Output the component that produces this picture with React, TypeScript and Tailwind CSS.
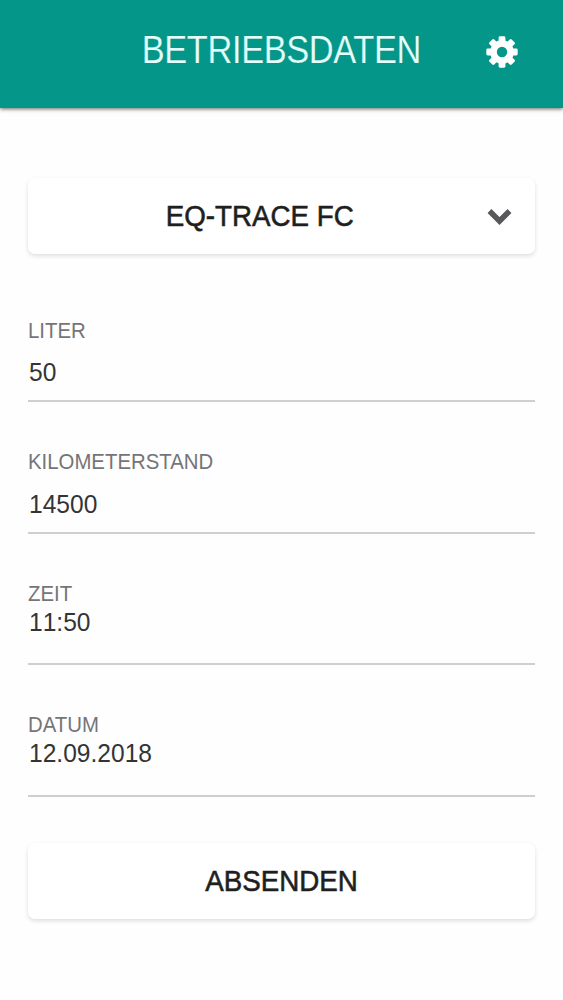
import { useState } from "react";

type Field = {
  label: string;
  value: string;
  labelClass: string;
  valueClass: string;
};

const fields: Field[] = [
  { label: "LITER", value: "50", labelClass: "mt-[18px]", valueClass: "mt-[15px]" },
  { label: "KILOMETERSTAND", value: "14500", labelClass: "mt-[17px]", valueClass: "mt-[16px]" },
  { label: "ZEIT", value: "11:50", labelClass: "mt-[17px]", valueClass: "mt-[2px]" },
  { label: "DATUM", value: "12.09.2018", labelClass: "mt-[17px]", valueClass: "mt-[2px]" }
];

const cardClass =
  "flex h-[76px] w-full items-center rounded-[7px] bg-white shadow-[0_2px_4px_rgba(0,0,0,0.13)]";

const buttonTextClass =
  "inline-block scale-x-[0.925] whitespace-nowrap text-[30px] leading-none text-[#1f1f21] [-webkit-text-stroke:0.6px_#1f1f21]";

const toothAngles = [0, 45, 90, 135];

function GearIcon() {
  return (
    <svg width="38" height="38" viewBox="-19 -19 38 38" className="text-white">
      {toothAngles.map((angle) => (
        <rect
          key={angle}
          x="-3.4"
          y="-15.7"
          width="6.8"
          height="31.4"
          rx="1.4"
          fill="currentColor"
          transform={`rotate(${angle})`}
        />
      ))}
      <circle r="11.8" fill="currentColor" />
      <circle r="5.2" fill="#049688" />
    </svg>
  );
}

export default function App() {
  const [values, setValues] = useState(fields.map((field) => field.value));

  function updateValue(index: number, value: string) {
    setValues((current) => current.map((item, i) => (i === index ? value : item)));
  }

  return (
    <div className="h-[1000px] w-[563px] overflow-hidden bg-[#fefefe] font-['Liberation_Sans',Arial,sans-serif]">
      <header className="grid h-[108px] grid-cols-[82px_1fr_82px] items-start bg-[#049688] shadow-[0_1px_4px_rgba(0,0,0,0.6)]">
        <span />
        <h1 className="mt-[31px] flex justify-center">
          <span className="inline-block scale-x-[0.905] whitespace-nowrap text-[38px] leading-[38px] tracking-[-0.4px] text-[#e2fffb] [-webkit-text-stroke:0.2px_#049688]">
            BETRIEBSDATEN
          </span>
        </h1>
        <button type="button" aria-label="Einstellungen" className="mt-[33px] ml-[2px]">
          <GearIcon />
        </button>
      </header>

      <main className="px-7 pt-[70px]">
        <button type="button" className={cardClass}>
          <span className="w-[464px] pt-px text-center">
            <span className={buttonTextClass}>EQ-TRACE FC</span>
          </span>
          <svg width="25" height="17" viewBox="0 0 25 17" fill="none" className="-ml-[5px]">
            <path d="M2.5 3L12.5 13L22.5 3" stroke="#58585a" strokeWidth="5.5" />
          </svg>
        </button>

        <form className="pt-[47px]" onSubmit={(event) => event.preventDefault()}>
          {fields.map((field, index) => (
            <label
              key={field.label}
              className="flex h-[131.5px] flex-col border-b-2 border-[#cfcfd0] first:h-[101px]"
            >
              <span
                className={`${field.labelClass} ${index > 0 ? "pt-[31px]" : ""} block self-start whitespace-nowrap text-[22.5px] leading-[24px] text-[#757577]`}
              >
                <span className="inline-block origin-left scale-x-[0.905]">{field.label}</span>
              </span>
              <input
                className={`${field.valueClass} h-7 w-full origin-left scale-x-[0.945] bg-transparent pl-px text-[26px] leading-7 text-[#343436] outline-none [font-kerning:none]`}
                value={values[index]}
                onChange={(event) => updateValue(index, event.target.value)}
              />
            </label>
          ))}
          <button type="submit" className={`${cardClass} mt-[46px] justify-center`}>
            <span className={buttonTextClass}>ABSENDEN</span>
          </button>
        </form>
      </main>
    </div>
  );
}
